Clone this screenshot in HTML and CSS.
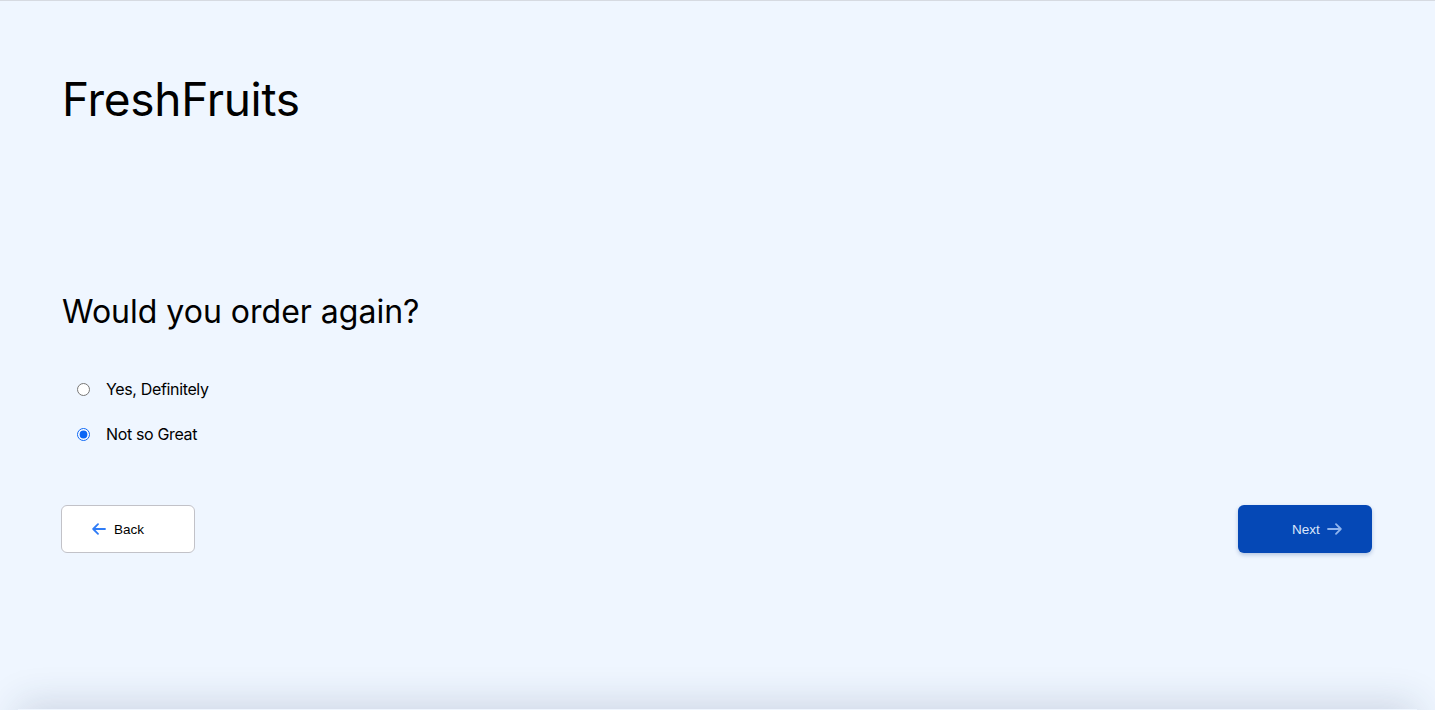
FILE: index.html
```html
<!DOCTYPE html>
<html lang="en">
<head>
<meta charset="utf-8">
<title>FreshFruits</title>
<link rel="stylesheet" href="styles.css">
</head>
<body>
<div class="page">
  <header class="brand">FreshFruits</header>
  <main class="question">
    <h1 class="title">Would you order again?</h1>
    <div class="options">
      <label class="option"><input type="radio" name="again" class="radio"><span>Yes, Definitely</span></label>
      <label class="option"><input type="radio" name="again" class="radio" checked><span>Not so Great</span></label>
    </div>
    <div class="actions">
      <button class="btn btn-back" type="button">
        <svg class="arrow" width="14" height="12" viewBox="0 0 14 12" fill="none" stroke="#2f7cf6" stroke-width="1.8" stroke-linecap="round" stroke-linejoin="round"><path d="M13 6H1.5M6 1.2 1.2 6 6 10.8"/></svg>
        <span>Back</span>
      </button>
      <button class="btn btn-next" type="button">
        <span>Next</span>
        <svg class="arrow" width="15" height="12" viewBox="0 0 15 12" fill="none" stroke="#8fb4ee" stroke-width="1.8" stroke-linecap="round" stroke-linejoin="round"><path d="M1 6h12.5M9 1.2 13.8 6 9 10.8"/></svg>
      </button>
    </div>
  </main>
</div>
<section class="next-card"></section>
</body>
</html>
```
FILE: styles.css
```css
html, body {
  margin: 0;
  padding: 0;
  background: #eff6ff;
}
body {
  font-family: "Inter", "Noto Sans", sans-serif;
  color: #000;
}
.page {
  border-top: 1px solid #d6dae1;
  height: 709px;
  padding: 0 62px;
  box-sizing: border-box;
}
.brand {
  font-size: 46px;
  line-height: 56px;
  margin-top: 70px;
  font-weight: 400;
  letter-spacing: -0.3px;
}
.question {
  margin-top: 165px;
}
.title {
  font-size: 32px;
  line-height: 40px;
  font-weight: 400;
  margin: 0;
  letter-spacing: 0;
}
.options {
  display: flex;
  flex-direction: column;
  gap: 23px;
  margin-top: 46px;
  padding-left: 15px;
}
.option {
  display: flex;
  align-items: center;
  gap: 16px;
  font-size: 16px;
  line-height: 22px;
  letter-spacing: -0.35px;
}
.radio {
  width: 13px;
  height: 13px;
  margin: 0;
  accent-color: #0b66f5;
}
.actions {
  display: flex;
  justify-content: space-between;
  margin-top: 60px;
}
.btn {
  width: 134px;
  height: 48px;
  border-radius: 6px;
  display: flex;
  align-items: center;
  justify-content: center;
  gap: 8px;
  font-family: "Liberation Sans", Arial, sans-serif;
  font-size: 13.5px;
  cursor: pointer;
}
.btn-back {
  margin-left: -1px;
  background: #fff;
  border: 1px solid #c2c2c8;
  color: #000;
  padding-right: 26px;
}
.btn-next {
  margin-right: 1px;
  background: #0548b6;
  border: none;
  color: #dbe6fa;
  padding-left: 30px;
  gap: 7px;
  box-shadow: 0 2px 4px rgba(4, 50, 130, 0.25);
}
.next-card {
  margin: 0 18px;
  height: 200px;
  background: #eff6ff;
  box-shadow: 0 -6px 36px rgba(30, 50, 90, 0.16);
}
```
